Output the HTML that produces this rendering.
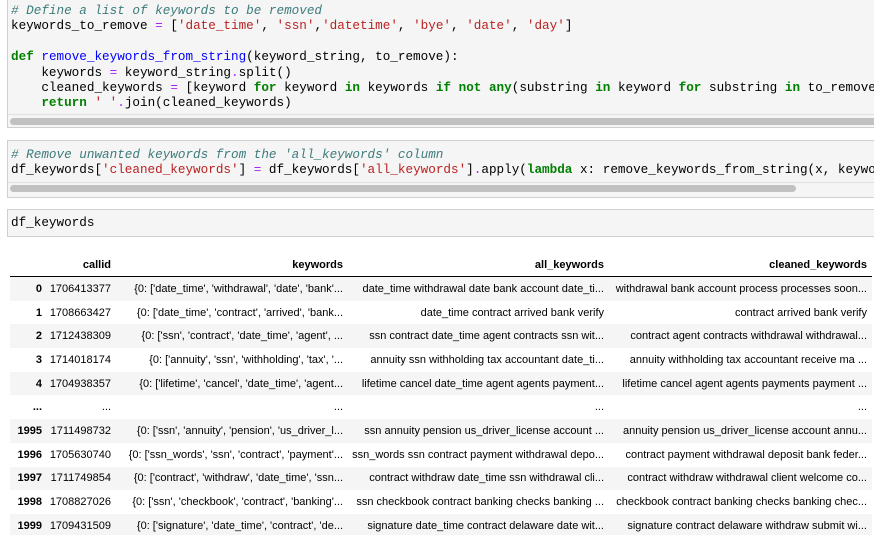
<!DOCTYPE html>
<html><head><style>
html,body{margin:0;width:874px;height:535px;overflow:hidden;background:#fff}
body{position:relative;font-family:"Liberation Sans",sans-serif}
.cell{position:absolute;left:7px;width:867px;background:#f5f5f5;border:1px solid #cfcfcf;border-right:none;box-sizing:border-box;overflow:hidden}
.code{position:absolute;left:3px;font-family:"Liberation Mono",monospace;font-size:12.65px;line-height:15.4px;white-space:pre;color:#000}
.c{color:#3d7b7b;font-style:italic}.s{color:#ba2121}.k{color:#008000;font-weight:bold}.f{color:#0000ff}.o{color:#aa22ff}
.sb{position:absolute;left:0;right:0;height:1px;background:#e0e0e0}
.bar{position:absolute;height:7px;border-radius:4px;background:#c1c1c1}
table{position:absolute;left:10px;top:253px;border-collapse:collapse;table-layout:fixed;width:862px;font-size:11px;color:#000}
th,td{text-align:right;padding:0 5px 0 0;white-space:nowrap;overflow:hidden}
th{height:23px;font-weight:bold;border-bottom:1.5px solid #000}
td{height:23.7px}
tbody tr:nth-child(odd){background:#f5f5f5}
td:first-child{font-weight:bold}
</style></head><body>
<div class="cell" style="top:-2px;height:130px">
<div class="code" style="top:4px"><span class="c"># Define a list of keywords to be removed</span>
keywords_to_remove <span class="o">=</span> [<span class="s">'date_time'</span>, <span class="s">'ssn'</span>,<span class="s">'datetime'</span>, <span class="s">'bye'</span>, <span class="s">'date'</span>, <span class="s">'day'</span>]

<span class="k">def</span> <span class="f">remove_keywords_from_string</span>(keyword_string, to_remove):
    keywords <span class="o">=</span> keyword_string<span class="o">.</span>split()
    cleaned_keywords <span class="o">=</span> [keyword <span class="k">for</span> keyword <span class="k">in</span> keywords <span class="k">if</span> <span class="k">not</span> <span class="k">any</span>(substring <span class="k">in</span> keyword <span class="k">for</span> substring <span class="k">in</span> to_remove
    <span class="k">return</span> <span class="s">' '</span><span class="o">.</span>join(cleaned_keywords)</div>
<div class="sb" style="top:115px"></div>
<div class="bar" style="top:119px;left:2px;width:880px"></div>
</div>

<div class="cell" style="top:140px;height:58px">
<div class="code" style="top:6px"><span class="c"># Remove unwanted keywords from the 'all_keywords' column</span>
df_keywords[<span class="s">'cleaned_keywords'</span>] <span class="o">=</span> df_keywords[<span class="s">'all_keywords'</span>]<span class="o">.</span>apply(<span class="k">lambda</span> x: remove_keywords_from_string(x, keywords_to_remove))</div>
<div class="sb" style="top:41px"></div>
<div class="bar" style="top:44px;left:2px;width:786px"></div>
</div>

<div class="cell" style="top:209px;height:28px">
<div class="code" style="top:5px">df_keywords</div>
</div>

<table>
<colgroup><col style="width:37px"><col style="width:69px"><col style="width:232px"><col style="width:261px"><col style="width:263px"></colgroup>
<thead><tr><th></th><th>callid</th><th>keywords</th><th>all_keywords</th><th>cleaned_keywords</th></tr></thead>
<tbody>
<tr><td>0</td><td>1706413377</td><td>{0: ['date_time', 'withdrawal', 'date', 'bank'...</td><td>date_time withdrawal date bank account date_ti...</td><td>withdrawal bank account process processes soon...</td></tr>
<tr><td>1</td><td>1708663427</td><td>{0: ['date_time', 'contract', 'arrived', 'bank...</td><td>date_time contract arrived bank verify</td><td>contract arrived bank verify</td></tr>
<tr><td>2</td><td>1712438309</td><td>{0: ['ssn', 'contract', 'date_time', 'agent', ...</td><td>ssn contract date_time agent contracts ssn wit...</td><td>contract agent contracts withdrawal withdrawal...</td></tr>
<tr><td>3</td><td>1714018174</td><td>{0: ['annuity', 'ssn', 'withholding', 'tax', '...</td><td>annuity ssn withholding tax accountant date_ti...</td><td>annuity withholding tax accountant receive ma ...</td></tr>
<tr><td>4</td><td>1704938357</td><td>{0: ['lifetime', 'cancel', 'date_time', 'agent...</td><td>lifetime cancel date_time agent agents payment...</td><td>lifetime cancel agent agents payments payment ...</td></tr>
<tr><td>...</td><td>...</td><td>...</td><td>...</td><td>...</td></tr>
<tr><td>1995</td><td>1711498732</td><td>{0: ['ssn', 'annuity', 'pension', 'us_driver_l...</td><td>ssn annuity pension us_driver_license account ...</td><td>annuity pension us_driver_license account annu...</td></tr>
<tr><td>1996</td><td>1705630740</td><td>{0: ['ssn_words', 'ssn', 'contract', 'payment'...</td><td>ssn_words ssn contract payment withdrawal depo...</td><td>contract payment withdrawal deposit bank feder...</td></tr>
<tr><td>1997</td><td>1711749854</td><td>{0: ['contract', 'withdraw', 'date_time', 'ssn...</td><td>contract withdraw date_time ssn withdrawal cli...</td><td>contract withdraw withdrawal client welcome co...</td></tr>
<tr><td>1998</td><td>1708827026</td><td>{0: ['ssn', 'checkbook', 'contract', 'banking'...</td><td>ssn checkbook contract banking checks banking ...</td><td>checkbook contract banking checks banking chec...</td></tr>
<tr><td>1999</td><td>1709431509</td><td>{0: ['signature', 'date_time', 'contract', 'de...</td><td>signature date_time contract delaware date wit...</td><td>signature contract delaware withdraw submit wi...</td></tr>
</tbody></table>
</body></html>
